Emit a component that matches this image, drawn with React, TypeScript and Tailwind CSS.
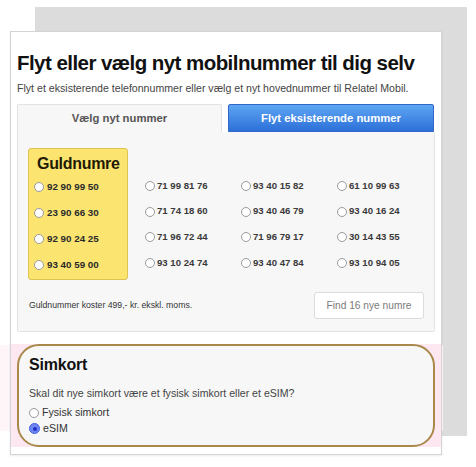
import { type ReactNode } from 'react'

const FONT = { fontFamily: '"Liberation Sans", Arial, sans-serif' }

const guldnumre = ['92 90 99 50', '23 90 66 30', '92 90 24 25', '93 40 59 00']

const numre = [
  '71 99 81 76', '93 40 15 82', '61 10 99 63',
  '71 74 18 60', '93 40 46 79', '93 40 16 24',
  '71 96 72 44', '71 96 79 17', '30 14 43 55',
  '93 10 24 74', '93 40 47 84', '93 10 94 05',
]

function Radio({ checked = false }: { checked?: boolean }) {
  if (checked) {
    return (
      <span className="flex h-[11px] w-[11px] shrink-0 items-center justify-center rounded-full border border-[#3f5fe0] bg-[#6f86f3]">
        <span className="h-[4px] w-[4px] rounded-full bg-[#1f2fc8]" />
      </span>
    )
  }
  return <span className="h-[10px] w-[10px] shrink-0 rounded-full border border-[#9a9a9a] bg-white" />
}

function NumberOption({ children, gold = false }: { children: ReactNode; gold?: boolean }) {
  return (
    <label className={gold ? 'flex h-[26px] items-center gap-[3px]' : 'flex h-[25.7px] items-center gap-[2px]'}>
      <Radio />
      <span className={gold ? 'text-[9.8px] font-bold text-[#2a2a2a]' : 'text-[9.6px] font-bold text-[#3a3a3a]'}>
        {children}
      </span>
    </label>
  )
}

export default function App() {
  return (
    <div className="relative h-[467px] w-[476px] overflow-hidden bg-white" style={FONT}>
      {/* grå baggrund bag kortet */}
      <div className="absolute left-[35px] top-[7px] h-[429px] w-[432px] bg-[#dcdcdc]" />
      {/* svag lyserød markering bag simkort-boksen */}
      <div className="absolute left-0 top-[345px] h-[86px] w-[443px] bg-[#fef5f8]" />

      <div className="relative ml-[10px] mt-[31px] w-[432px] border border-[#d4d4d4] bg-white px-[6px] pb-[7px] pt-[19px] shadow-[0_1px_2px_rgba(0,0,0,0.08)]">
        <h1 className="text-[20.5px] font-bold leading-[24px] tracking-[-0.55px] text-[#111]">
          Flyt eller vælg nyt mobilnummer til dig selv
        </h1>
        <p className="mt-[6px] text-[10.6px] leading-[14px] text-[#444]">
          Flyt et eksisterende telefonnummer eller vælg et nyt hovednummer til Relatel Mobil.
        </p>

        {/* faner */}
        <div className="mt-[9px] flex h-[28px] gap-[6px]">
          <div className="flex w-[205px] items-center justify-center rounded-t-[2px] border border-b-0 border-[#e2e2e2] bg-[#f7f7f7] text-[11.3px] font-bold text-[#555]">
            Vælg nyt nummer
          </div>
          <div className="flex w-[206px] items-center justify-center rounded-t-[2px] border border-[#2f68c9] bg-gradient-to-b from-[#5ea6f4] to-[#2d6fd8] text-[11.3px] font-bold text-white">
            Flyt eksisterende nummer
          </div>
        </div>

        {/* panel */}
        <div className="h-[200px] rounded-b-[2px] border border-t-0 border-[#e2e2e2] bg-[#f7f7f7] px-[10px] pt-[16px]">
          <div className="flex">
            <div className="h-[132px] w-[100px] shrink-0 rounded-[3px] border border-[#dfc352] bg-[#fce471] pl-[5px] pt-[5px]">
              <div className="pl-[3px] text-[16px] font-bold leading-[20px] tracking-[-0.3px] text-[#1f1a05]">Guldnumre</div>
              {guldnumre.map((n) => (
                <NumberOption key={n} gold>
                  {n}
                </NumberOption>
              ))}
            </div>
            <div className="ml-[17px] mt-[25px] grid flex-1 grid-cols-[96px_96px_1fr] self-start">
              {numre.map((n) => (
                <NumberOption key={n}>{n}</NumberOption>
              ))}
            </div>
          </div>

          <div className="mt-[12px] flex items-center justify-between">
            <span className="pl-[1px] text-[8.7px] text-[#333]">Guldnummer koster 499,- kr. ekskl. moms.</span>
            <button
              type="button"
              className="h-[27px] w-[110px] rounded-[3px] border border-[#dcdcdc] bg-white text-[10.2px] text-[#7a7a7a]"
            >
              Find 16 nye numre
            </button>
          </div>
        </div>

        {/* simkort */}
        <div className="-mx-[6px] mt-[12px] bg-[#fde7f0] px-[6px]">
          <div className="h-[103px] rounded-[22px] border-2 border-[#a8894a] bg-[#f7f7f7] pl-[10px] pt-[9px]">
            <h2 className="text-[16px] font-bold leading-[20px] tracking-[-0.2px] text-[#111]">Simkort</h2>
            <p className="mt-[11px] text-[10.6px] leading-[14px] text-[#444]">
              Skal dit nye simkort være et fysisk simkort eller et eSIM?
            </p>
            <div className="mt-[5px] flex flex-col">
              <label className="flex h-[16px] items-center gap-[3px] text-[10.6px] text-[#333]">
                <Radio />
                Fysisk simkort
              </label>
              <label className="flex h-[15px] items-center gap-[3px] text-[10.6px] text-[#333]">
                <Radio checked />
                eSIM
              </label>
            </div>
          </div>
        </div>
      </div>
    </div>
  )
}
